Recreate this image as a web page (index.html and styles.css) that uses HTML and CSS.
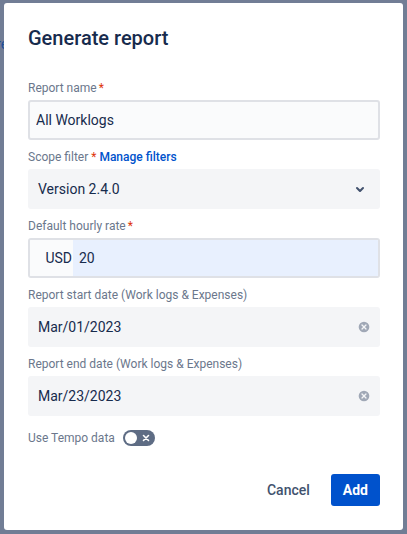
FILE: index.html
```html
<!DOCTYPE html>
<html lang="en">
<head>
    <meta charset="UTF-8">
    <meta name="viewport" content="width=device-width, initial-scale=1.0">
    <title>Generate report</title>
    <link rel="stylesheet" href="styles.css">
</head>
<body>
    <!-- page link peeking out from behind the blanket -->
    <span class="behind-link">Configure</span>

    <div class="modal">
        <h1 class="modal-title">Generate report</h1>

        <form class="report-form">
            <label class="field-label">Report name<span class="required">*</span></label>
            <input class="text-field" type="text" value="All Worklogs">

            <label class="field-label">Scope filter <span class="required inline">*</span> <a class="label-link" href="#">Manage filters</a></label>
            <div class="select-field">
                <span>Version 2.4.0</span>
                <svg class="select-chevron" width="24" height="24" viewBox="0 0 24 24">
                    <path fill="currentColor" d="M8.292 10.293a1.009 1.009 0 0 0 0 1.419l2.939 2.965c.218.215.5.322.779.322s.556-.107.769-.322l2.93-2.955a1.01 1.01 0 0 0 0-1.419.987.987 0 0 0-1.406 0l-2.298 2.317-2.307-2.327a.99.99 0 0 0-1.406 0z"/>
                </svg>
            </div>

            <label class="field-label">Default hourly rate<span class="required">*</span></label>
            <div class="rate-field">
                <span class="rate-currency">USD</span>
                <input class="rate-input" type="text" value="20">
            </div>

            <label class="field-label">Report start date (Work logs &amp; Expenses)</label>
            <div class="select-field">
                <span>Mar/01/2023</span>
                <svg class="clear-icon" width="16" height="16" viewBox="0 0 24 24">
                    <path fill="currentColor" d="M12 20a8 8 0 1 1 0-16 8 8 0 0 1 0 16zm1.41-8l2.29-2.29c.19-.18.3-.43.3-.71a1.003 1.003 0 0 0-1.71-.71L12 10.590 9.710 8.290A1.003 1.003 0 0 0 8.290 9.710L10.590 12l-2.3 2.290c-.19.18-.3.43-.3.71a1.003 1.003 0 0 0 1.710.710L12 13.410l2.290 2.290c.18.19.43.3.71.3a1.003 1.003 0 0 0 .710-1.710L13.410 12z"/>
                </svg>
            </div>

            <label class="field-label">Report end date (Work logs &amp; Expenses)</label>
            <div class="select-field">
                <span>Mar/23/2023</span>
                <svg class="clear-icon" width="16" height="16" viewBox="0 0 24 24">
                    <path fill="currentColor" d="M12 20a8 8 0 1 1 0-16 8 8 0 0 1 0 16zm1.41-8l2.29-2.29c.19-.18.3-.43.3-.71a1.003 1.003 0 0 0-1.71-.71L12 10.590 9.710 8.290A1.003 1.003 0 0 0 8.290 9.710L10.590 12l-2.3 2.290c-.19.18-.3.43-.3.71a1.003 1.003 0 0 0 1.710.710L12 13.410l2.290 2.290c.18.19.43.3.71.3a1.003 1.003 0 0 0 .710-1.710L13.410 12z"/>
                </svg>
            </div>

            <div class="toggle-row">
                <span class="field-label toggle-label">Use Tempo data</span>
                <span class="toggle">
                    <span class="toggle-knob"></span>
                    <svg class="toggle-cross" width="8" height="8" viewBox="0 0 8 8">
                        <path d="M1.5 1.5l5 5M6.5 1.5l-5 5" stroke="#fff" stroke-width="1.6" stroke-linecap="round"/>
                    </svg>
                </span>
            </div>
        </form>

        <div class="modal-footer">
            <button class="btn btn-subtle" type="button">Cancel</button>
            <button class="btn btn-primary" type="button">Add</button>
        </div>
    </div>
</body>
</html>
```

FILE: styles.css
```css
:root {
    --text-color: #172b4d;
    --subtle-text: #6b778c;
    --brand-blue: #0052cc;
    --field-bg: #f4f5f7;
    --field-border: #dfe1e6;
}

* {
    box-sizing: border-box;
}

body {
    margin: 0;
    width: 407px;
    height: 534px;
    overflow: hidden;
    background: #717d95;
    font-family: Roboto, 'Liberation Sans', sans-serif;
    color: var(--text-color);
    position: relative;
}

.behind-link {
    position: absolute;
    left: -52px;
    top: 36px;
    font-size: 14px;
    color: #1d4f9a;
}

.modal {
    position: relative;
    margin: 3px 0 0 4px;
    width: 399px;
    height: 527px;
    background: white;
    border-radius: 3px;
    padding: 23px 23px 0 24px;
    display: flex;
    flex-direction: column;
}

.modal-title {
    margin: 0;
    font-size: 20px;
    line-height: 24px;
    font-weight: 500;
    color: var(--text-color);
}

.report-form {
    display: flex;
    flex-direction: column;
    padding-top: 30px;
}

.field-label {
    display: block;
    font-size: 12px;
    line-height: 16px;
    font-weight: 400;
    color: var(--subtle-text);
    margin: 9px 0 4px;
}

.report-form > .field-label:first-child {
    margin-top: 0;
}

.required {
    color: #de350b;
    margin-left: 2px;
}

.required.inline {
    margin-left: 0;
}

.label-link {
    color: var(--brand-blue);
    text-decoration: none;
    font-weight: 500;
}

.text-field {
    height: 40px;
    width: 100%;
    border: 2px solid var(--field-border);
    border-radius: 3px;
    background: #fafbfc;
    padding: 0 6px;
    font-family: inherit;
    font-size: 14px;
    color: var(--text-color);
    outline: none;
}

.select-field {
    height: 40px;
    border-radius: 3px;
    background: var(--field-bg);
    padding: 0 8px 0 10px;
    display: flex;
    align-items: center;
    justify-content: space-between;
    font-size: 14px;
    color: var(--text-color);
}

.select-chevron {
    color: #42526e;
}

.clear-icon {
    color: #a0a8b6;
}

.rate-field {
    height: 40px;
    display: flex;
    border: 2px solid var(--field-border);
    border-radius: 3px;
    overflow: hidden;
    background: #fafbfc;
}

.rate-currency {
    width: 43px;
    display: flex;
    align-items: center;
    justify-content: flex-end;
    padding-right: 1px;
    font-size: 14px;
    color: var(--text-color);
    background: #fafbfc;
}

.rate-input {
    flex: 1;
    border: none;
    outline: none;
    background: #e8f0fe;
    padding: 0 6px;
    font-family: inherit;
    font-size: 14px;
    color: var(--text-color);
}

.toggle-row {
    display: flex;
    align-items: center;
    gap: 8px;
    margin-top: 14px;
    height: 16px;
}

.toggle-label {
    margin: 0;
}

.toggle {
    position: relative;
    width: 32px;
    height: 16px;
    border-radius: 8px;
    background: #5e6c84;
    display: flex;
    align-items: center;
    justify-content: flex-end;
    padding-right: 5px;
}

.toggle-knob {
    position: absolute;
    left: 2px;
    top: 2px;
    width: 12px;
    height: 12px;
    border-radius: 50%;
    background: white;
}

.modal-footer {
    display: flex;
    justify-content: flex-end;
    gap: 9px;
    margin-top: 28px;
}

.btn {
    height: 32px;
    border: none;
    border-radius: 3px;
    padding: 0 12px;
    font-family: inherit;
    font-size: 14px;
    font-weight: 500;
    cursor: pointer;
}

.btn-subtle {
    background: transparent;
    color: #42526e;
}

.btn-primary {
    background: var(--brand-blue);
    color: white;
    font-weight: 700;
}
```
